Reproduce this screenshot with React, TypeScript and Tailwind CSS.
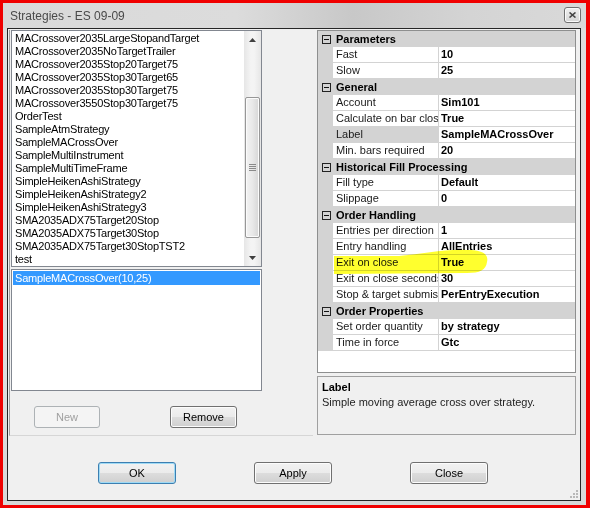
import type { ReactNode } from 'react'

const strategies = [
  'MACrossover2035LargeStopandTarget',
  'MACrossover2035NoTargetTrailer',
  'MACrossover2035Stop20Target75',
  'MACrossover2035Stop30Target65',
  'MACrossover2035Stop30Target75',
  'MACrossover3550Stop30Target75',
  'OrderTest',
  'SampleAtmStrategy',
  'SampleMACrossOver',
  'SampleMultiInstrument',
  'SampleMultiTimeFrame',
  'SimpleHeikenAshiStrategy',
  'SimpleHeikenAshiStrategy2',
  'SimpleHeikenAshiStrategy3',
  'SMA2035ADX75Target20Stop',
  'SMA2035ADX75Target30Stop',
  'SMA2035ADX75Target30StopTST2',
  'test',
]

type GridRow =
  | { cat: string }
  | { name: string; value: string; selected?: boolean }

const gridRows: GridRow[] = [
  { cat: 'Parameters' },
  { name: 'Fast', value: '10' },
  { name: 'Slow', value: '25' },
  { cat: 'General' },
  { name: 'Account', value: 'Sim101' },
  { name: 'Calculate on bar close', value: 'True' },
  { name: 'Label', value: 'SampleMACrossOver', selected: true },
  { name: 'Min. bars required', value: '20' },
  { cat: 'Historical Fill Processing' },
  { name: 'Fill type', value: 'Default' },
  { name: 'Slippage', value: '0' },
  { cat: 'Order Handling' },
  { name: 'Entries per direction', value: '1' },
  { name: 'Entry handling', value: 'AllEntries' },
  { name: 'Exit on close', value: 'True' },
  { name: 'Exit on close seconds', value: '30' },
  { name: 'Stop & target submission', value: 'PerEntryExecution' },
  { cat: 'Order Properties' },
  { name: 'Set order quantity', value: 'by strategy' },
  { name: 'Time in force', value: 'Gtc' },
]

function Arrow({ up }: { up?: boolean }) {
  return (
    <svg width="7" height="4" viewBox="0 0 7 4">
      <path d={up ? 'M0 4 L3.5 0 L7 4 Z' : 'M0 0 L3.5 4 L7 0 Z'} fill="#404040" />
    </svg>
  )
}

function ScrollBar() {
  return (
    <div className="flex h-full w-[17px] shrink-0 flex-col bg-[linear-gradient(to_right,#e6e6e6,#f4f4f4_40%,#f4f4f4_60%,#e6e6e6)]">
      <div className="flex h-[17px] items-center justify-center">
        <Arrow up />
      </div>
      <div className="flex-1">
        <div className="mx-[1px] mt-[49px] flex h-[141px] items-center justify-center rounded-[2px] border border-[#979797] bg-[linear-gradient(to_right,#f3f3f3,#e8e8e8_50%,#d6d6d6)] shadow-[inset_0_0_0_1px_#fbfbfb]">
          <div className="flex flex-col gap-[1px]">
            <div className="h-[1px] w-[7px] bg-[#8a8a8a]" />
            <div className="h-[1px] w-[7px] bg-[#8a8a8a]" />
            <div className="h-[1px] w-[7px] bg-[#8a8a8a]" />
            <div className="h-[1px] w-[7px] bg-[#8a8a8a]" />
          </div>
        </div>
      </div>
      <div className="flex h-[17px] items-center justify-center">
        <Arrow />
      </div>
    </div>
  )
}

function WinButton({
  children,
  className,
  disabled,
  focused,
}: {
  children: ReactNode
  className?: string
  disabled?: boolean
  focused?: boolean
}) {
  const look = disabled
    ? 'border-[#adb2b5] bg-[#f4f4f4] text-[#a0a0a0]'
    : focused
      ? 'border-[#3c7fb1] bg-[linear-gradient(to_bottom,#f2f2f2,#ebebeb_50%,#dddddd_50%,#cfcfcf)] text-black shadow-[inset_0_0_0_1px_#9fdaf5]'
      : 'border-[#707070] bg-[linear-gradient(to_bottom,#f2f2f2,#ebebeb_50%,#dddddd_50%,#cfcfcf)] text-black shadow-[inset_0_0_0_1px_#fcfcfc]'
  return (
    <div
      className={`flex h-[22px] items-center justify-center rounded-[3px] border text-[11px] ${look} ${className ?? ''}`}
    >
      {children}
    </div>
  )
}

function MinusBox() {
  return (
    <div className="flex h-[9px] w-[9px] items-center justify-center border border-[#222]">
      <div className="h-[1px] w-[5px] bg-[#111]" />
    </div>
  )
}

function PropertyGrid() {
  return (
    <div className="relative h-[343px] w-[259px] border border-[#8e8f8f] bg-white">
      {gridRows.map((row) =>
        'cat' in row ? (
          <div key={row.cat} className="flex h-[16px] items-center bg-[#d3d3d3]">
            <div className="flex w-[15px] justify-center pl-[2px]">
              <MinusBox />
            </div>
            <span className="pl-[3px] text-[11px] font-bold text-black">{row.cat}</span>
          </div>
        ) : (
          <div key={row.name} className="flex h-[16px]">
            <div className="w-[15px] shrink-0 bg-[#d3d3d3]" />
            <div
              className={`flex w-[106px] shrink-0 items-center overflow-hidden whitespace-nowrap border-r border-b border-[#d3d3d3] pl-[3px] text-[11px] text-[#1a1a1a] ${row.selected ? 'bg-[#d3d3d3]' : ''}`}
            >
              {row.name}
            </div>
            <div className="flex flex-1 items-center overflow-hidden whitespace-nowrap border-b border-[#d3d3d3] pl-[2px] text-[11px] font-bold text-black">
              {row.value}
            </div>
          </div>
        ),
      )}
      <svg
        className="pointer-events-none absolute top-0 left-0 mix-blend-multiply"
        width="259"
        height="343"
        viewBox="-1 -1 259 343"
      >
        <path
          d="M15 224 L80 224 C104 222 124 217 148 218 C163 218 170 222 168 230 C167 238 161 241 148 241 L15 242 Z"
          fill="#ffff2e"
        />
      </svg>
    </div>
  )
}

export default function App() {
  return (
    <div
      className="h-[508px] w-[590px] border-t-[3px] border-r-[4px] border-b-[3px] border-l-[3px] border-[#f00000]"
      style={{ fontFamily: '"Liberation Sans", Arial, sans-serif' }}
    >
      <div className="flex h-full flex-col bg-[linear-gradient(to_bottom,#d2d2d2,#dedede_6%,#e2e2e2_50%,#d8d8d8)] pr-[5px] pb-[4px] pl-[4px]">
        {/* title bar */}
        <div className="flex h-[25px] shrink-0 items-center justify-between bg-[linear-gradient(to_right,#d9d9d9,#dcdcdc_40%,#c8c8c8_60%,#d4d4d4_80%,#d9d9d9)] pl-[3px] -ml-[4px] -mr-[5px] pr-[5px]">
          <span className="pl-[4px] text-[12px] text-[#4a4a4a]">Strategies - ES 09-09</span>
          <div className="mb-[2px] flex h-[16px] w-[17px] items-center justify-center rounded-[3px] border border-[#6f6f6f] bg-[linear-gradient(to_bottom,#f0f0f0,#d6d6d6)] shadow-[inset_0_0_0_1px_#fafafa]">
            <svg width="7" height="6" viewBox="0 0 7 6">
              <path d="M0.5 0.5 L6.5 5.5 M6.5 0.5 L0.5 5.5" stroke="#444" strokeWidth="1.6" />
            </svg>
          </div>
        </div>

        {/* client area */}
        <div className="relative flex flex-1 flex-col border border-[#262626] bg-[#f0f0f0]">
          <div className="flex pt-[1px]">
            <div className="ml-[1px] w-[304px] border-b border-l border-[#a0a0a0] border-b-[#d6d6d6] pb-[7px]">
              <div className="ml-[1px] flex h-[237px] w-[251px] border border-[#828790] bg-white">
                <div className="flex-1 overflow-hidden pt-[1px] pl-[3px] text-[11px] leading-[13px] tracking-[-0.2px] text-black">
                  {strategies.map((s) => (
                    <div key={s} className="h-[13px] whitespace-nowrap">
                      {s}
                    </div>
                  ))}
                </div>
                <ScrollBar />
              </div>
              <div className="mt-[2px] ml-[1px] h-[122px] w-[251px] border border-[#828790] bg-white p-[1px]">
                <div className="h-[14px] bg-[#3399ff] pl-[2px] text-[11px] leading-[14px] tracking-[-0.2px] text-white">
                  SampleMACrossOver(10,25)
                </div>
              </div>
              <div className="mt-[15px] flex gap-[70px] pl-[24px]">
                <WinButton disabled className="w-[66px]">
                  New
                </WinButton>
                <WinButton className="w-[67px]">Remove</WinButton>
              </div>
            </div>
            <div className="ml-[4px] flex flex-col">
              <PropertyGrid />
              <div className="mt-[3px] h-[59px] w-[259px] border border-[#a0a0a0] bg-[#f0f0f0] px-[4px] pt-[3px] text-[11px] leading-[15px] text-black">
                <div className="font-bold">Label</div>
                <div className="text-[#222]">Simple moving average cross over strategy.</div>
              </div>
            </div>
          </div>

          <div className="mt-[26px] flex gap-[78px] pl-[90px]">
            <WinButton focused className="w-[78px]">
              OK
            </WinButton>
            <WinButton className="w-[78px]">Apply</WinButton>
            <WinButton className="w-[78px]">Close</WinButton>
          </div>

          {/* size grip */}
          <div className="absolute right-[2px] bottom-[2px] grid grid-cols-3 gap-[1px]">
            <div className="h-[2px] w-[2px]" />
            <div className="h-[2px] w-[2px]" />
            <div className="h-[2px] w-[2px] bg-[#b8b8b8]" />
            <div className="h-[2px] w-[2px]" />
            <div className="h-[2px] w-[2px] bg-[#b8b8b8]" />
            <div className="h-[2px] w-[2px] bg-[#b8b8b8]" />
            <div className="h-[2px] w-[2px] bg-[#b8b8b8]" />
            <div className="h-[2px] w-[2px] bg-[#b8b8b8]" />
            <div className="h-[2px] w-[2px] bg-[#b8b8b8]" />
          </div>
        </div>
      </div>
    </div>
  )
}
